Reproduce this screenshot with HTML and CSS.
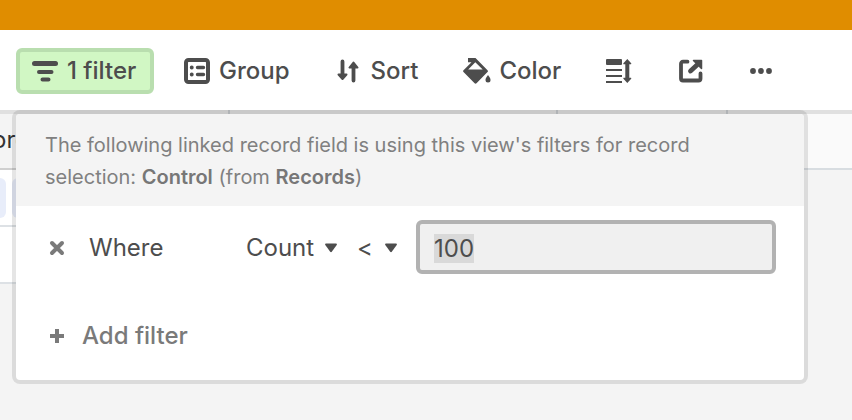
FILE: index.html
```html
<!DOCTYPE html>
<html lang="en">
<head>
  <meta charset="UTF-8">
  <meta name="viewport" content="width=device-width, initial-scale=1.0">
  <title>Filters</title>
  <link rel="stylesheet" href="styles.css">
</head>
<body>
  <div class="top-bar"></div>

  <!-- View toolbar -->
  <nav class="toolbar">
    <button class="tool tool-filter active">
      <svg width="26" height="22" viewBox="0 0 26 22" fill="none" stroke="currentColor" stroke-linecap="round">
        <path d="M2.5 3.5h21" stroke-width="5"/>
        <path d="M7 12h12.500M10.500 19.500h6" stroke-width="4"/>
      </svg>
      1 filter
    </button>
    <button class="tool tool-group">
      <svg width="26" height="26" viewBox="0 0 26 26" fill="none" stroke="currentColor" stroke-linecap="round">
        <rect x="2" y="2" width="22" height="22" rx="2.500" stroke-width="4"/>
        <path d="M13.500 9.500h6M13.500 16.500h6" stroke-width="3.400"/>
        <path d="M7.700 9.500h.1M7.700 16.500h.1" stroke-width="3.800"/>
      </svg>
      Group
    </button>
    <button class="tool tool-sort">
      <svg width="22" height="24" viewBox="0 0 22 24" fill="currentColor" stroke="currentColor" stroke-linecap="round" stroke-linejoin="round">
        <path d="M5.500 2.500V16M16.500 8v13.500" fill="none" stroke-width="3.800"/>
        <path d="M1.500 15.500h8l-4 4.500zM12.500 8.500h8l-4-5z" stroke-width="2"/>
      </svg>
      Sort
    </button>
    <button class="tool tool-color">
      <svg width="28" height="26" viewBox="0 0 28 26" fill="currentColor">
        <path fill-rule="evenodd" d="M5 0h7.500l12 12.300c.6.600.6 1.200 0 1.800L13.500 25.200c-.6.600-1.300.6-1.900 0L.5 14c-.6-.6-.6-1.200 0-1.800L8.500 4.200H5zM12.300 4.300L5.200 11.500h14.500z"/>
        <path d="M25 17c1.600 2.200 2.500 3.500 2.500 4.900a2.500 2.500 0 0 1-5 0c0-1.400.9-2.700 2.500-4.900z"/>
      </svg>
      Color
    </button>
    <button class="tool tool-height" aria-label="Row height">
      <svg width="26" height="24" viewBox="0 0 26 24" fill="currentColor">
        <rect x="0" y="0" width="16" height="6" rx="1"/>
        <path d="M0 10h16v2H0zM0 16h16v2H0zM0 22h16v2H0z"/>
        <path d="M21.300 0l3.900 4.200c.3.700 0 1-.6 1H23.300v13.600h1.300c.6 0 .9.300.6 1L21.300 24l-3.900-4.200c-.3-.7 0-1 .6-1h1.300V5.200H18c-.6 0-.9-.3-.6-1z"/>
      </svg>
    </button>
    <button class="tool tool-share" aria-label="Share view">
      <svg width="24" height="24" viewBox="0 0 24 24" fill="none" stroke="currentColor" stroke-linecap="round" stroke-linejoin="round">
        <path d="M8.500 2.700H4a2 2 0 0 0-2 2V19.500a2 2 0 0 0 2 2h15.500a2 2 0 0 0 2-2V14.500" stroke-width="3.800"/>
        <path d="M11.500 12L18 6" stroke-width="4.800"/>
        <path d="M14.500 1.500h8v8z" fill="currentColor" stroke-width="1.500"/>
      </svg>
    </button>
    <button class="tool tool-more" aria-label="More options">
      <svg width="22" height="6" viewBox="0 0 22 6" fill="currentColor">
        <circle cx="3" cy="3" r="2.900"/>
        <circle cx="11" cy="3" r="2.900"/>
        <circle cx="19" cy="3" r="2.900"/>
      </svg>
    </button>
  </nav>

  <main class="grid">
    <!-- Records behind the popover -->
    <table class="records">
      <colgroup>
        <col class="col-first">
        <col class="col-wide">
        <col class="col-narrow">
        <col>
      </colgroup>
      <thead>
        <tr><th>ore</th><th></th><th></th><th class="blank"></th></tr>
      </thead>
      <tbody>
        <tr><td><div class="chips"><span class="chip chip-end"></span><span class="chip"></span></div></td><td></td><td></td><td class="blank"></td></tr>
        <tr><td></td><td></td><td></td><td class="blank"></td></tr>
      </tbody>
    </table>

    <!-- Filter popover -->
    <section class="popover">
      <p class="notice">The following linked record field is using this view's filters for record selection: <strong>Control</strong> (from <strong>Records</strong>)</p>
      <form class="filter-row">
        <button type="button" class="remove" aria-label="Remove filter">
          <svg width="16" height="16" viewBox="0 0 16 16" fill="none" stroke="currentColor" stroke-width="4" stroke-linecap="round">
            <path d="M3 3l10 10M13 3L3 13"/>
          </svg>
        </button>
        <label class="where" for="filter-value">Where</label>
        <button type="button" class="picker field">
          Count
          <svg width="12" height="10" viewBox="0 0 12 10" fill="currentColor"><path d="M1 .5h10c.9 0 1.200.7.7 1.400L6.800 8.700c-.5.600-1.100.6-1.600 0L.3 1.900C-.2 1.200.1.500 1 .5z"/></svg>
        </button>
        <button type="button" class="picker operator">
          &lt;
          <svg width="12" height="10" viewBox="0 0 12 10" fill="currentColor"><path d="M1 .5h10c.9 0 1.200.7.7 1.400L6.800 8.700c-.5.600-1.100.6-1.600 0L.3 1.900C-.2 1.200.1.500 1 .5z"/></svg>
        </button>
        <input type="text" id="filter-value" class="value" value="100" autocomplete="off">
      </form>
      <button type="button" class="add-filter">
        <svg width="16" height="16" viewBox="0 0 16 16" fill="none" stroke="currentColor" stroke-width="4">
          <path d="M8 1v14M1 8h14"/>
        </svg>
        Add filter
      </button>
    </section>
  </main>

  <script>
    const filterValue = document.getElementById('filter-value');
    filterValue.focus();
    filterValue.select();
  </script>
</body>
</html>
```
FILE: styles.css
```css
* {
  box-sizing: border-box;
}

body {
  margin: 0;
  min-height: 100vh;
  background-color: #f4f4f4;
  color: #4d4d4d;
  font-family: Inter, "Liberation Sans", sans-serif;
  font-size: 24px;
  line-height: 32px;
  overflow-x: hidden;
}

button {
  display: flex;
  align-items: center;
  padding: 0;
  border: none;
  background: none;
  color: inherit;
  font: inherit;
  white-space: nowrap;
  cursor: pointer;
}

svg {
  display: block;
  flex: none;
}

.top-bar {
  height: 30px;
  background-color: #e08d00;
}

/* Toolbar */
.toolbar {
  display: flex;
  align-items: center;
  height: 80px;
  padding: 2px 16px 0;
  background-color: white;
}

.tool {
  height: 46px;
  gap: 9px;
  margin-right: 47px;
  font-weight: 500;
}

.tool-filter {
  width: 138px;
  margin-right: 30px;
  padding: 0 12px;
}

.tool-filter.active {
  border: 4px solid #b9deaf;
  border-radius: 6px;
  background-color: #d1f7c4;
}

.tool-sort {
  gap: 12px;
  margin-right: 45px;
}

.tool-color {
  gap: 8px;
  margin-right: 45px;
}

/* Table */
.grid {
  position: relative;
}

.records {
  width: 100%;
  table-layout: fixed;
  border-collapse: separate;
  border-spacing: 0;
}

.col-first {
  width: 230px;
}

.col-wide {
  width: 328px;
}

.col-narrow {
  width: 170px;
}

.records th,
.records td {
  height: 57px;
  padding: 0;
  border-right: 2px solid #d5d9dd;
  border-bottom: 2px solid #dde1e5;
  background-color: white;
}

.records th {
  height: 60px;
  padding-top: 2px;
  border-right-color: #c4c8cb;
  border-bottom-color: #cfcfcf;
  background: linear-gradient(#e0e0e0 4px, #f4f4f4 4px);
  color: #333;
  font-weight: 400;
  text-align: left;
  text-indent: -8px;
}

.records .blank {
  border: none;
  background-color: #f4f4f4;
}

.records th.blank {
  border-bottom: 2px solid #d8dde1;
  background: linear-gradient(#e0e0e0 4px, #fafafa 4px);
}

.chips {
  display: flex;
  gap: 6px;
}

.chip {
  width: 80px;
  height: 40px;
  border-radius: 6px;
  background-color: #e8edfa;
}

.chip-end {
  width: 6px;
  border-radius: 0 6px 6px 0;
}

/* Popover */
.popover {
  position: absolute;
  top: 4px;
  left: 16px;
  width: 788px;
  border-radius: 4px;
  background-color: white;
  box-shadow: 0 0 0 4px rgba(0, 0, 0, 0.1);
}

.notice {
  margin: 0;
  padding: 15px 29px 13px;
  border-radius: 4px 4px 0 0;
  background-color: #f4f4f4;
  color: #808080;
  font-size: 20px;
}

.notice strong {
  color: #777;
  font-weight: 600;
}

.filter-row {
  display: flex;
  align-items: center;
  padding: 14px 28px 14px 33px;
}

.filter-row > * {
  padding-top: 2px;
}

.remove,
.add-filter {
  color: #7a7a7a;
}

.where {
  width: 157px;
  margin-left: 24px;
}

.picker {
  justify-content: space-between;
}

.field {
  width: 91px;
}

.operator {
  width: 40px;
  margin: 0 19px 0 20px;
}

.filter-row .value {
  flex: 1;
  min-width: 0;
  height: 54px;
  padding: 2px 14px 0;
  border: 4px solid #b2b2b2;
  border-radius: 6px;
  outline: none;
  background-color: #f0f0f0;
  color: #4d4d4d;
  font: inherit;
}

.value::selection {
  background-color: #d9d9d9;
  color: #4d4d4d;
}

.add-filter {
  gap: 17px;
  margin: 0 33px;
  padding: 32px 0 28px;
  font-weight: 500;
}
```
